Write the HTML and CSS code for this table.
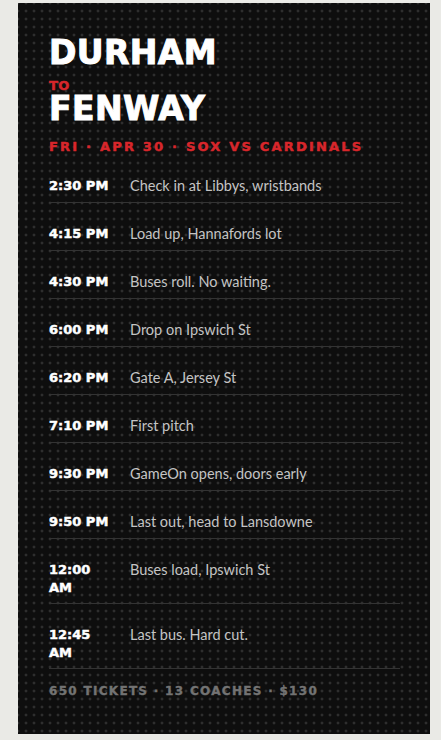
FILE: index.html
```html
<!DOCTYPE html>
<html lang="en">
<head>
    <meta charset="UTF-8">
    <meta name="viewport" content="width=device-width, initial-scale=1.0">
    <title>Durham to Fenway</title>
    <link rel="stylesheet" href="styles.css">
</head>
<body>
    <div class="card">
        <h1 class="title">
            <span class="big">DURHAM</span>
            <span class="to">TO</span>
            <span class="big">FENWAY</span>
        </h1>
        <p class="sub">FRI · APR 30 · SOX VS CARDINALS</p>

        <ul class="schedule">
            <li><span class="time">2:30 PM</span><span class="what">Check in at Libbys, wristbands</span></li>
            <li><span class="time">4:15 PM</span><span class="what">Load up, Hannafords lot</span></li>
            <li><span class="time">4:30 PM</span><span class="what">Buses roll. No waiting.</span></li>
            <li><span class="time">6:00 PM</span><span class="what">Drop on Ipswich St</span></li>
            <li><span class="time">6:20 PM</span><span class="what">Gate A, Jersey St</span></li>
            <li><span class="time">7:10 PM</span><span class="what">First pitch</span></li>
            <li><span class="time">9:30 PM</span><span class="what">GameOn opens, doors early</span></li>
            <li><span class="time">9:50 PM</span><span class="what">Last out, head to Lansdowne</span></li>
            <li><span class="time">12:00 AM</span><span class="what">Buses load, Ipswich St</span></li>
            <li><span class="time">12:45 AM</span><span class="what">Last bus. Hard cut.</span></li>
        </ul>

        <p class="foot">650 TICKETS · 13 COACHES · $130</p>
    </div>
</body>
</html>
```

FILE: styles.css
```css
body {
    margin: 0;
    padding: 3px 11px 6px 18px;
    background-color: #eaeae6;
}

/* Картка */
.card {
    background-color: #0e0e0e;
    background-image: radial-gradient(circle, #2e2e2e 0, #2e2e2e 1px, transparent 1.8px);
    background-size: 8px 8px;
    background-position: 4px 4px;
    padding: 33px 30px 35px 31px;
    font-family: "DejaVu Sans", sans-serif;
}

/* Заголовок */
.title {
    margin: 0;
    font-weight: bold;
    color: #fff;
}
.big {
    display: block;
    font-size: 33px;
    line-height: 33px;
    letter-spacing: 0.4px;
    -webkit-text-stroke: 1px #fff;
}
.to {
    display: block;
    font-size: 13px;
    line-height: 13px;
    margin: 10px 0 0;
    letter-spacing: 0.5px;
    color: #d8262b;
    -webkit-text-stroke: 0.5px #d8262b;
}
.sub {
    margin: 14px 0 0;
    font-size: 13px;
    line-height: 16px;
    font-weight: bold;
    letter-spacing: 2.2px;
    color: #d8262b;
    -webkit-text-stroke: 0.5px #d8262b;
}

/* Розклад */
.schedule {
    list-style: none;
    margin: 0;
    padding: 0;
}
.schedule li {
    display: flex;
    align-items: flex-start;
    gap: 17px;
    padding: 22px 0 7px;
    border-bottom: 1px solid #333;
}
.time {
    width: 64px;
    flex-shrink: 0;
    font-size: 13px;
    line-height: 17.5px;
    font-weight: bold;
    color: #fff;
    -webkit-text-stroke: 0.5px #fff;
}
.what {
    font-family: Lato, sans-serif;
    font-size: 14.5px;
    line-height: 18px;
    color: #c4c4c4;
}

/* Підсумок */
.foot {
    margin: 14px 0 0;
    font-size: 12px;
    line-height: 16px;
    font-weight: bold;
    letter-spacing: 1.3px;
    color: #737373;
    -webkit-text-stroke: 0.4px #737373;
}
```
